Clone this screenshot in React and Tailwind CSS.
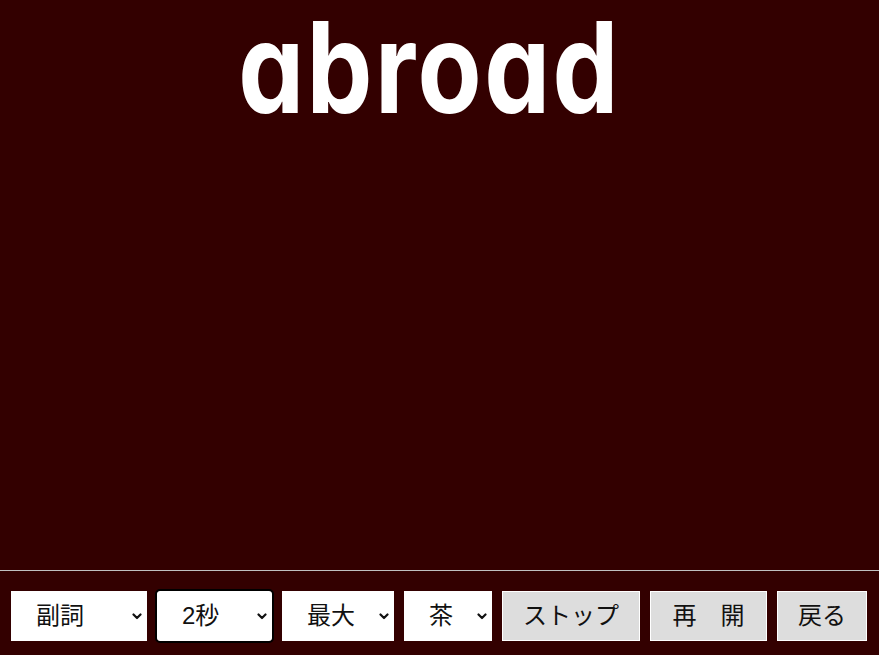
import React from "react";

const Chevron = () => (
  <svg width="10" height="7" viewBox="0 0 10 7" className="shrink-0">
    <path d="M1.5 1.5 L5 5 L8.5 1.5" fill="none" stroke="#111" strokeWidth="2.2" strokeLinecap="round" strokeLinejoin="round" />
  </svg>
);

function FakeSelect({ label, width, focused }) {
  return (
    <div
      className={`flex h-[50px] items-center justify-between bg-white pl-[25px] pr-[5px] text-[24px] leading-none text-[#111] ${width} ${
        focused ? "rounded-[3px] outline-2 outline-offset-0 outline-black ring-1 ring-inset ring-white" : ""
      }`}
    >
      <span>{label}</span>
      <Chevron />
    </div>
  );
}

function Btn({ label, width }) {
  return (
    <button
      className={`h-[50px] border border-white bg-[#dddddd] text-[24px] leading-none text-[#111] ${width}`}
    >
      {label}
    </button>
  );
}

export default function App() {
  return (
    <div
      className="flex h-[655px] w-full flex-col overflow-hidden bg-[#330000]"
      style={{ fontFamily: '"Liberation Sans", "Noto Sans CJK JP", sans-serif' }}
    >
      <div className="flex h-[570px] justify-center pr-[19px]">
        <div
          className="mt-[4px] scale-x-[0.83] text-[126px] font-bold leading-none tracking-[3px] text-white"
          style={{ fontFamily: 'Inter, "DejaVu Sans", sans-serif', fontFeatureSettings: '"cv11" 1' }}
        >
          abroad
        </div>
      </div>
      <div className="h-px w-full bg-[#c0c0c0]" />
      <div className="flex items-center gap-[10px] pl-[11px] pt-[20px]">
        <FakeSelect label="副詞" width="w-[136px]" />
        <FakeSelect label="2秒" width="w-[115px]" focused />
        <FakeSelect label="最大" width="w-[112px]" />
        <FakeSelect label="茶" width="w-[88px]" />
        <Btn label="ストップ" width="w-[138px]" />
        <Btn label="再　開" width="w-[117px]" />
        <Btn label="戻る" width="w-[90px]" />
      </div>
    </div>
  );
}
